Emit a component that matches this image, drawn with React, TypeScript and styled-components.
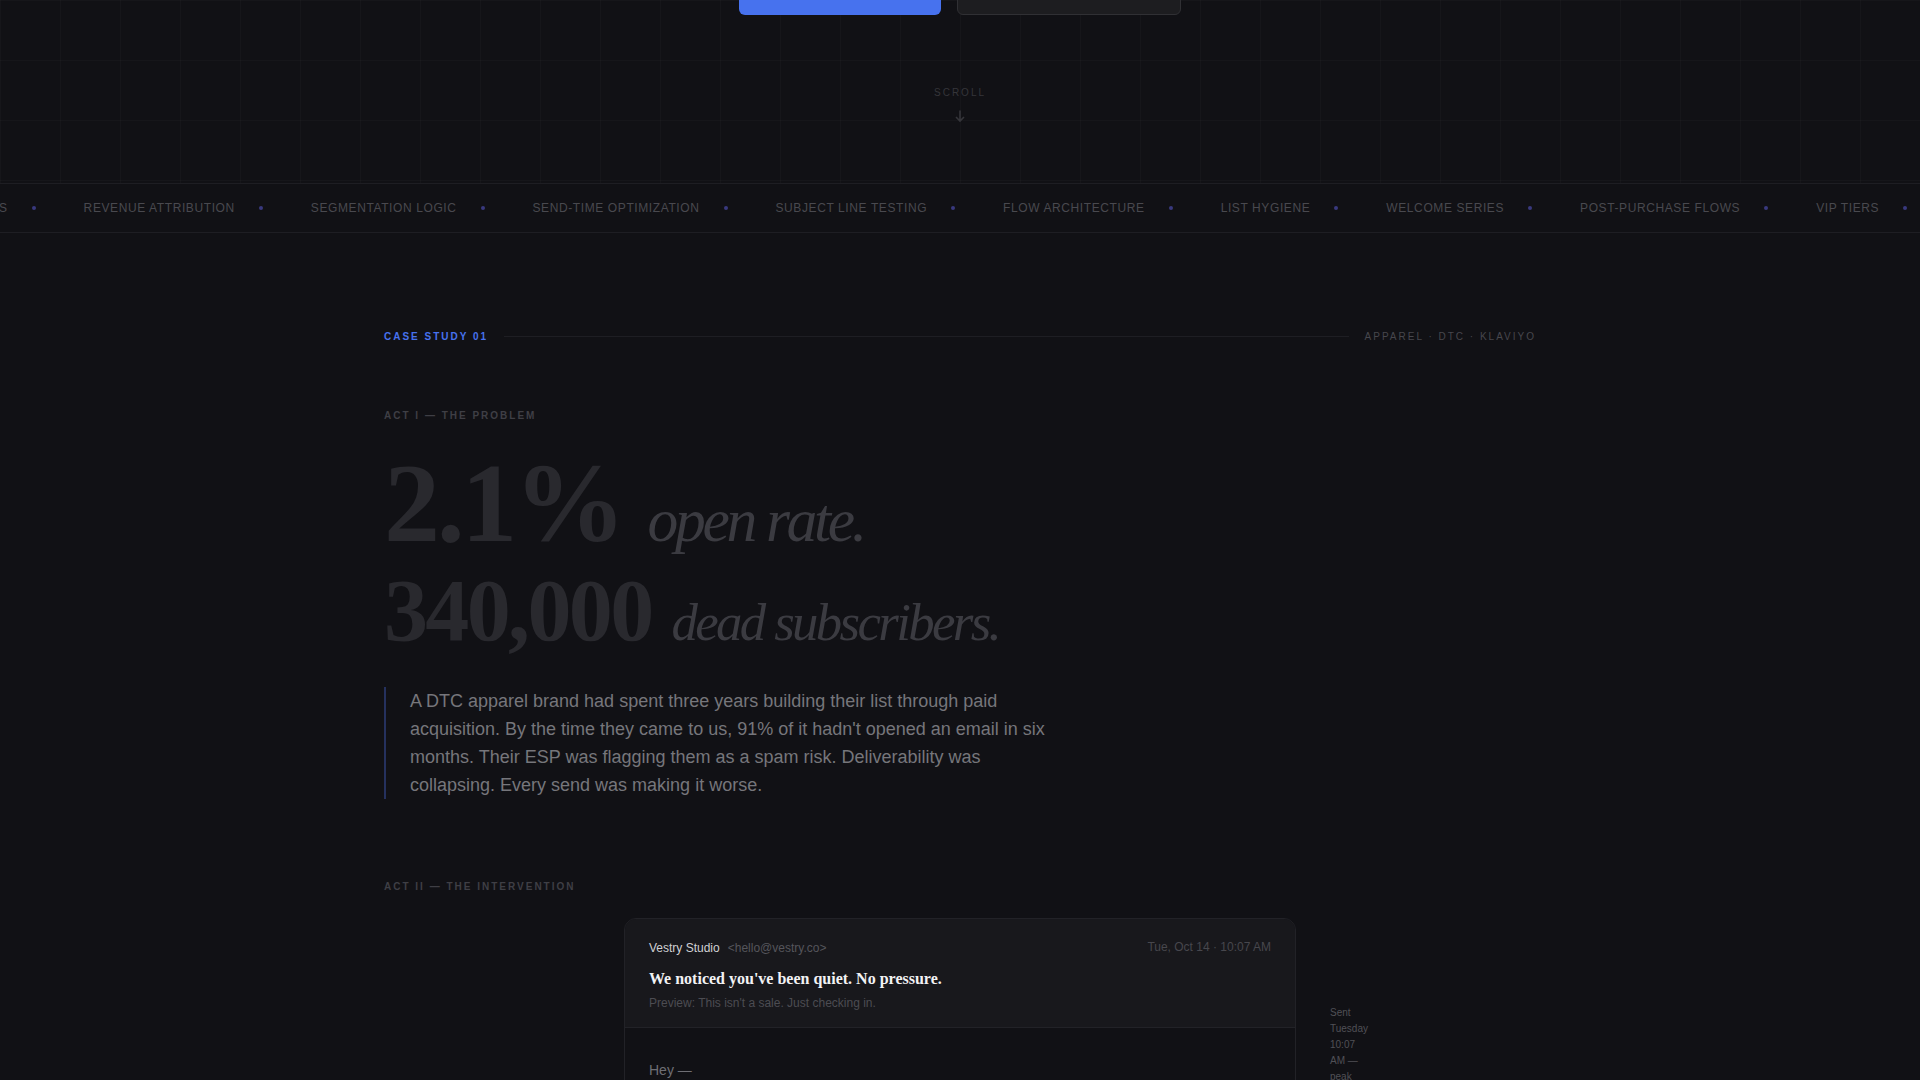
import styled, { createGlobalStyle } from 'styled-components';

const GlobalStyle = createGlobalStyle`
  html, body {
    margin: 0;
    height: 100%;
    overflow: hidden;
    background: #111115;
  }
  * {
    box-sizing: border-box;
  }
`;

const sans = `'Liberation Sans', Arial, sans-serif`;
const serif = `'Liberation Serif', 'Times New Roman', serif`;

const Page = styled.div`
  height: 1080px;
  overflow: hidden;
  background: #111115;
  font-family: ${sans};
`;

const Hero = styled.section`
  height: 183px;
  overflow: hidden;
  display: flex;
  flex-direction: column;
  align-items: center;
  background-color: #111115;
  background-image:
    linear-gradient(rgba(255, 255, 255, 0.02) 1px, transparent 1px),
    linear-gradient(90deg, rgba(255, 255, 255, 0.02) 1px, transparent 1px);
  background-size: 60px 60px;
`;

const HeroActions = styled.div`
  display: flex;
  gap: 16px;
  margin-top: -45px;
`;

const HeroButton = styled.button<{ $primary?: boolean }>`
  width: ${({ $primary }) => ($primary ? '202px' : '224px')};
  height: 60px;
  border-radius: 6px;
  border: ${({ $primary }) => ($primary ? 'none' : '1px solid #303034')};
  background: ${({ $primary }) => ($primary ? '#4772ee' : '#1d1d20')};
`;

const ScrollHint = styled.div`
  margin-top: 72px;
  display: flex;
  flex-direction: column;
  align-items: center;
  gap: 11px;
  color: #35353a;
  font-size: 10px;
  letter-spacing: 0.2em;
`;

const ScrollArrow = styled.svg`
  width: 14px;
  height: 14px;
  display: block;
`;

const Marquee = styled.div`
  height: 50px;
  border-top: 1px solid #1e1e23;
  border-bottom: 1px solid #1e1e23;
  overflow: hidden;
  display: flex;
  align-items: center;
`;

const MarqueeTrack = styled.div`
  display: flex;
  align-items: center;
  gap: 48px;
  flex-shrink: 0;
  margin-left: -1px;
`;

const MarqueeItem = styled.div`
  display: flex;
  align-items: center;
  gap: 24px;
  flex-shrink: 0;
  font-size: 12px;
  letter-spacing: 0.05em;
  color: #49494f;
  white-space: nowrap;
`;

const Dot = styled.span`
  width: 4px;
  height: 4px;
  border-radius: 50%;
  background: #39397e;
`;

const Study = styled.main`
  width: 1152px;
  margin: 0 auto;
  padding-top: 98px;
`;

const StudyHead = styled.div`
  display: flex;
  align-items: center;
  gap: 16px;
  margin-bottom: 68px;
`;

const StudyLabel = styled.span`
  font-size: 10px;
  font-weight: 700;
  letter-spacing: 0.2em;
  color: #4772ee;
`;

const Rule = styled.div`
  flex: 1;
  height: 1px;
  background: #1e1e23;
`;

const StudyTags = styled.span`
  font-size: 10px;
  letter-spacing: 0.2em;
  color: #47474d;
`;

const ActLabel = styled.div`
  font-size: 10px;
  font-weight: 700;
  letter-spacing: 0.2em;
  color: #3f3f45;
`;

const Stat = styled.div<{ $size: number; $top: number; $gap: number }>`
  margin-top: ${({ $top }) => $top}px;
  display: flex;
  align-items: baseline;
  gap: ${({ $gap }) => $gap}px;
  font-family: ${serif};
  font-size: ${({ $size }) => $size}px;
  line-height: 1;
  letter-spacing: -0.03em;
  white-space: nowrap;
`;

const StatNumber = styled.span`
  font-weight: 700;
  color: #29292e;
`;

const StatUnit = styled.em<{ $scale: number }>`
  font-size: ${({ $scale }) => $scale}em;
  color: #3b3b41;
`;

const Quote = styled.p`
  margin: 32px 0 0;
  width: 680px;
  padding-left: 24px;
  border-left: 2px solid #25315e;
  font-size: 18px;
  line-height: 28px;
  color: #76767b;
`;

const InterventionLabel = styled(ActLabel)`
  margin-top: 82px;
`;

const EmailWrap = styled.div`
  position: relative;
  width: 672px;
  margin: 26px auto 0;
`;

const EmailCard = styled.article`
  border: 1px solid #222227;
  border-radius: 12px;
  background: #111115;
  overflow: hidden;
`;

const EmailHeader = styled.header`
  height: 109px;
  padding: 21px 24px 0;
  background: #18181c;
  border-bottom: 1px solid #222227;
`;

const EmailMeta = styled.div`
  display: flex;
  align-items: flex-start;
  justify-content: space-between;
  font-size: 12px;
`;

const SenderLine = styled.span`
  margin-top: 1px;
`;

const Sender = styled.span`
  color: #d0d0d3;
`;

const SenderAddress = styled.span`
  margin-left: 8px;
  color: #55555b;
`;

const EmailDate = styled.span`
  color: #47474d;
`;

const Subject = styled.div`
  margin-top: 15px;
  font-family: ${serif};
  font-size: 16px;
  font-weight: 700;
  color: #f2f2f4;
`;

const Preview = styled.div`
  margin-top: 8px;
  font-size: 12px;
  color: #4c4c52;
`;

const EmailBody = styled.div`
  padding: 30px 24px;
  font-size: 14px;
  line-height: 24px;
  color: #6e6e74;
`;

const SideNote = styled.aside`
  position: absolute;
  left: 706px;
  top: 87px;
  width: 40px;
  font-size: 10px;
  line-height: 16px;
  color: #505056;
`;

const topics = [
  'REVENUE ATTRIBUTION',
  'SEGMENTATION LOGIC',
  'SEND-TIME OPTIMIZATION',
  'SUBJECT LINE TESTING',
  'FLOW ARCHITECTURE',
  'LIST HYGIENE',
  'WELCOME SERIES',
  'POST-PURCHASE FLOWS',
  'VIP TIERS',
];

export default function App() {
  return (
    <Page>
      <GlobalStyle />
      <Hero>
        <HeroActions>
          <HeroButton $primary />
          <HeroButton />
        </HeroActions>
        <ScrollHint>
          SCROLL
          <ScrollArrow viewBox="0 0 14 14" fill="none" stroke="#35353a" strokeWidth="1.6">
            <path d="M7 1.5v10.5M3 8l4 4 4-4" />
          </ScrollArrow>
        </ScrollHint>
      </Hero>

      <Marquee>
        <MarqueeTrack>
          <MarqueeItem>
            S
            <Dot />
          </MarqueeItem>
          {topics.map((topic) => (
            <MarqueeItem key={topic}>
              {topic}
              <Dot />
            </MarqueeItem>
          ))}
        </MarqueeTrack>
      </Marquee>

      <Study>
        <StudyHead>
          <StudyLabel>CASE STUDY 01</StudyLabel>
          <Rule />
          <StudyTags>APPAREL · DTC · KLAVIYO</StudyTags>
        </StudyHead>

        <ActLabel>ACT I — THE PROBLEM</ActLabel>
        <Stat $size={112} $top={26} $gap={25}>
          <StatNumber>2.1%</StatNumber>
          <StatUnit $scale={0.55}>open rate.</StatUnit>
        </Stat>
        <Stat $size={88} $top={8} $gap={20}>
          <StatNumber>340,000</StatNumber>
          <StatUnit $scale={0.6}>dead subscribers.</StatUnit>
        </Stat>
        <Quote>
          A DTC apparel brand had spent three years building their list through paid
          acquisition. By the time they came to us, 91% of it hadn't opened an email in six
          months. Their ESP was flagging them as a spam risk. Deliverability was collapsing.
          Every send was making it worse.
        </Quote>

        <InterventionLabel>ACT II — THE INTERVENTION</InterventionLabel>
        <EmailWrap>
          <EmailCard>
            <EmailHeader>
              <EmailMeta>
                <SenderLine>
                  <Sender>Vestry Studio</Sender>
                  <SenderAddress>&lt;hello@vestry.co&gt;</SenderAddress>
                </SenderLine>
                <EmailDate>Tue, Oct 14 · 10:07 AM</EmailDate>
              </EmailMeta>
              <Subject>We noticed you've been quiet. No pressure.</Subject>
              <Preview>Preview: This isn't a sale. Just checking in.</Preview>
            </EmailHeader>
            <EmailBody>Hey —</EmailBody>
          </EmailCard>
          <SideNote>Sent Tuesday 10:07 AM — peak</SideNote>
        </EmailWrap>
      </Study>
    </Page>
  );
}
